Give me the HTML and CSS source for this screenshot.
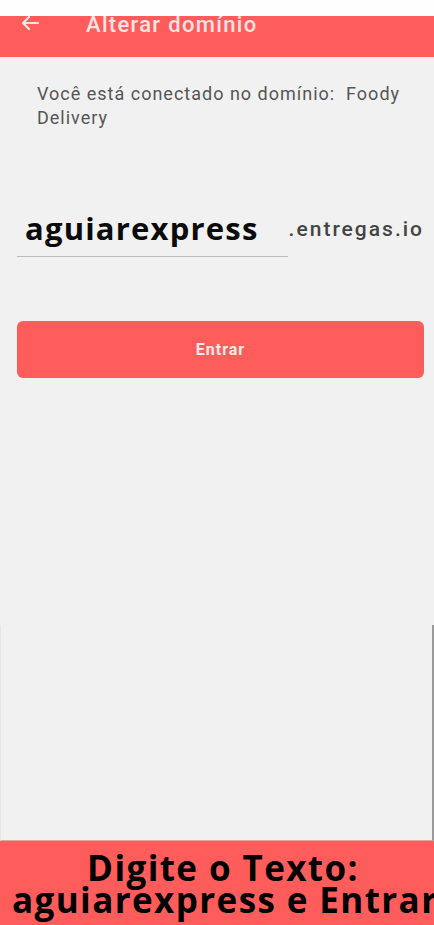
FILE: index.html
```html
<!DOCTYPE html>
<html lang="pt">
<head>
<meta charset="utf-8">
<link rel="stylesheet" href="styles.css">
</head>
<body>
<div class="screen">
  <div class="status"></div>
  <header class="appbar">
    <svg class="back" width="20" height="16" viewBox="0 0 20 16"><path d="M18 8H3M9 2L3 8l6 6" fill="none" stroke="#fbe3e3" stroke-width="2.2" stroke-linecap="round" stroke-linejoin="round"/></svg>
    <span class="title">Alterar domínio</span>
  </header>
  <main class="content">
    <p class="info">Você está conectado no domínio:&nbsp; Foody Delivery</p>
    <div class="domain">
      <div class="field">aguiarexpress</div>
      <span class="suffix">.entregas.io</span>
    </div>
    <button class="enter">Entrar</button>
  </main>
  <div class="frame"></div>
  <footer class="banner">
    <div class="line1">Digite o Texto:</div>
    <div class="line2">aguiarexpress e Entrar</div>
  </footer>
</div>
</body>
</html>
```
FILE: styles.css
```css
html, body {
  margin: 0;
  padding: 0;
  background: #f1f1f1;
}
.screen {
  width: 434px;
  height: 925px;
  display: flex;
  flex-direction: column;
  overflow: hidden;
  font-family: Roboto, "Liberation Sans", sans-serif;
}
.status {
  height: 16px;
  background: #fefefe;
  flex: none;
}
.appbar {
  height: 41px;
  background: #ff5c5c;
  flex: none;
  display: flex;
  align-items: flex-start;
  overflow: hidden;
}
.back {
  margin: 0 0 0 20px;
  position: relative;
  top: -1px;
}
.title {
  margin-left: 46px;
  margin-top: -4px;
  font-size: 22px;
  font-weight: 500;
  letter-spacing: 1.3px;
  color: #fbe3e3;
  line-height: 25px;
}
.content {
  flex: none;
  padding: 0 10px 0 17px;
}
.info {
  margin: 25px 0 0 20px;
  font-size: 18px;
  letter-spacing: 1px;
  line-height: 24px;
  color: #555;
  width: 380px;
}
.domain {
  margin-top: 78px;
  display: flex;
  align-items: flex-start;
}
.field {
  width: 263px;
  padding: 0 0 8px 8px;
  border-bottom: 1.5px solid #bdbdbd;
  font-family: "Open Sans", sans-serif;
  font-weight: 700;
  font-size: 31px;
  letter-spacing: 1.2px;
  line-height: 40px;
  color: #0a0a0a;
}
.suffix {
  margin-left: 1px;
  margin-top: 9px;
  font-size: 21px;
  font-weight: 500;
  letter-spacing: 2px;
  color: #444;
  line-height: 24px;
}
.enter {
  display: block;
  margin-top: 64px;
  width: 407px;
  height: 57px;
  border: none;
  border-radius: 6px;
  background: #ff5c5c;
  color: #fde9e9;
  font-family: Roboto, sans-serif;
  font-weight: 700;
  font-size: 16px;
  letter-spacing: 1px;
  padding: 0;
}
.frame {
  flex: none;
  margin-top: 247px;
  height: 215px;
  border-left: 1px solid #e6e6e6;
  border-right: 2px solid #9a9a9a;
  border-bottom: 1px solid #e8a0a0;
}
.banner {
  flex: 1;
  background: #ff5c5c;
  padding: 11px 0 0 12px;
  font-family: "Open Sans", sans-serif;
  font-weight: 700;
  font-size: 35px;
  letter-spacing: 1.4px;
  line-height: 32px;
  color: #000;
  text-align: center;
  white-space: nowrap;
}
.line2 {
  text-align: left;
}
```
